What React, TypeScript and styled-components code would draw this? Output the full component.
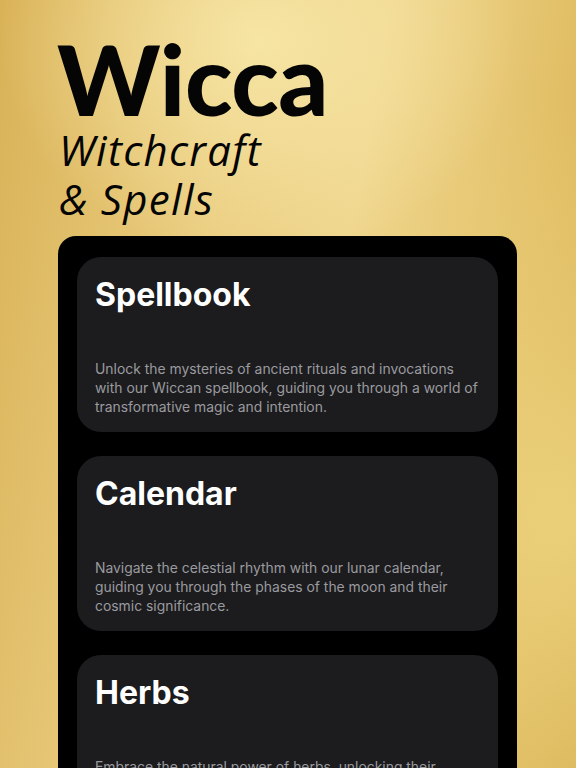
import React from "react";
import styled, { createGlobalStyle } from "styled-components";

const GlobalStyle = createGlobalStyle`
  html, body {
    margin: 0;
    padding: 0;
  }
  body {
    width: 576px;
    height: 768px;
    overflow: hidden;
    font-family: Inter, "Liberation Sans", sans-serif;
  }
`;

const Page = styled.div`
  width: 576px;
  height: 768px;
  overflow: hidden;
  box-sizing: border-box;
  padding: 32px 59px 0 57px;
  display: flex;
  flex-direction: column;
  background:
    radial-gradient(ellipse 260px 220px at 260px 40px, rgba(247, 230, 166, 0.95), rgba(247, 230, 166, 0) 100%),
    radial-gradient(ellipse 300px 420px at 560px 520px, rgba(236, 210, 125, 0.9), rgba(236, 210, 125, 0) 100%),
    linear-gradient(100deg, #d9b257 0%, #eacd80 35%, #efd68e 55%, #e2c068 80%, #d5ae4f 100%);
`;

const Header = styled.header`
  display: flex;
  flex-direction: column;
  color: #050505;
`;

const Logo = styled.h1`
  margin: 0;
  font-family: Lato, "DejaVu Sans", sans-serif;
  font-weight: 900;
  font-size: 98px;
  line-height: 92px;
  letter-spacing: -0.3px;
`;

const Tagline = styled.p`
  margin: 1px 0 0 2px;
  font-family: "Open Sans", "Noto Sans", sans-serif;
  font-style: italic;
  font-weight: 400;
  font-size: 42px;
  line-height: 49px;
  letter-spacing: 1.3px;
`;

const Panel = styled.section`
  margin-top: 13px;
  margin-left: 1px;
  flex: 1;
  background: #000;
  border-radius: 18px 18px 0 0;
  padding: 21px 19px 0;
  display: flex;
  flex-direction: column;
  gap: 24px;
`;

const Card = styled.article`
  height: 175px;
  flex-shrink: 0;
  box-sizing: border-box;
  background: #1c1c1e;
  border-radius: 24px;
  padding: 16px 18px 15px;
  display: flex;
  flex-direction: column;
  justify-content: space-between;
`;

const CardTitle = styled.h2`
  margin: 0;
  color: #fff;
  font-family: Inter, "Liberation Sans", sans-serif;
  font-weight: 700;
  font-size: 32px;
  line-height: 44px;
`;

const CardText = styled.p`
  margin: 0;
  color: #9a9a9f;
  font-family: Inter, "Liberation Sans", sans-serif;
  font-size: 13.9px;
  line-height: 19px;
  letter-spacing: 0;
`;

const sections = [
  {
    title: "Spellbook",
    text: "Unlock the mysteries of ancient rituals and invocations with our Wiccan spellbook, guiding you through a world of transformative magic and intention.",
  },
  {
    title: "Calendar",
    text: "Navigate the celestial rhythm with our lunar calendar, guiding you through the phases of the moon and their cosmic significance.",
  },
  {
    title: "Herbs",
    text: "Embrace the natural power of herbs, unlocking their healing and magical properties to enrich your rituals and everyday practice.",
  },
];

export default function App() {
  return (
    <>
      <GlobalStyle />
      <Page>
        <Header>
          <Logo>Wicca</Logo>
          <Tagline>
            Witchcraft
            <br />& Spells
          </Tagline>
        </Header>
        <Panel>
          {sections.map((s) => (
            <Card key={s.title}>
              <CardTitle>{s.title}</CardTitle>
              <CardText>{s.text}</CardText>
            </Card>
          ))}
        </Panel>
      </Page>
    </>
  );
}
